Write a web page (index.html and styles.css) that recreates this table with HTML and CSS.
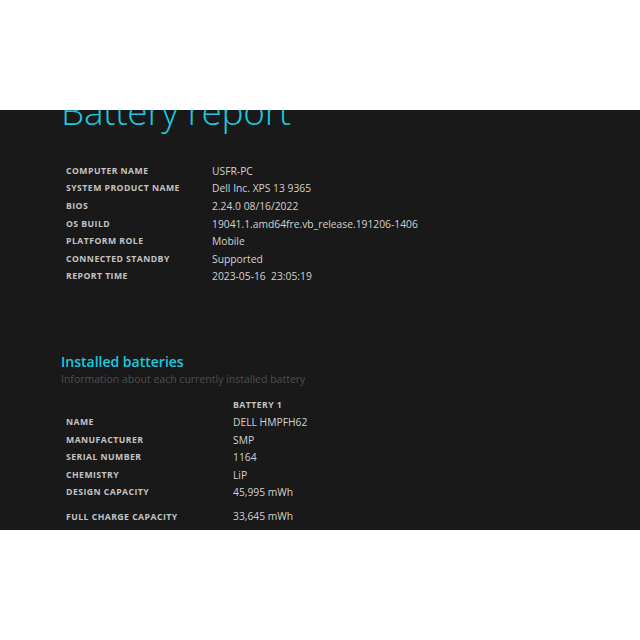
FILE: index.html
```html
<!DOCTYPE html>
<html>
<head>
<meta charset="utf-8">
<link rel="stylesheet" href="styles.css">
</head>
<body>
<div class="top"></div>
<div class="panel">
  <div class="content">
    <h1 class="title">Battery report</h1>
    <div class="info">
      <div class="lbl">Computer name</div><div class="val">USFR-PC</div>
      <div class="lbl">System product name</div><div class="val">Dell Inc. XPS 13 9365</div>
      <div class="lbl">BIOS</div><div class="val">2.24.0 08/16/2022</div>
      <div class="lbl">OS build</div><div class="val">19041.1.amd64fre.vb_release.191206-1406</div>
      <div class="lbl">Platform role</div><div class="val">Mobile</div>
      <div class="lbl">Connected standby</div><div class="val">Supported</div>
      <div class="lbl">Report time</div><div class="val">2023-05-16&nbsp;&nbsp;23:05:19</div>
    </div>
    <h2 class="section">Installed batteries</h2>
    <div class="sub">Information about each currently installed battery</div>
    <div class="batt">
      <div class="lbl"></div><div class="lbl">Battery 1</div>
      <div class="lbl">Name</div><div class="val">DELL HMPFH62</div>
      <div class="lbl">Manufacturer</div><div class="val">SMP</div>
      <div class="lbl">Serial number</div><div class="val">1164</div>
      <div class="lbl">Chemistry</div><div class="val">LiP</div>
      <div class="lbl">Design capacity</div><div class="val">45,995 mWh</div>
      <div class="lbl tall">Full charge capacity</div><div class="val tall">33,645 mWh</div>
      <div class="lbl">Cycle count</div><div class="val">-</div>
    </div>
  </div>
</div>
</body>
</html>
```
FILE: styles.css
```css
html, body { margin: 0; padding: 0; background: #ffffff; }
.top { height: 110px; }
.panel {
  height: 420px;
  background: #191919;
  overflow: hidden;
  font-family: "Open Sans", "Noto Sans", sans-serif;
}
.content { padding-left: 61px; margin-top: -21px; }
.title {
  margin: 0;
  font-weight: 300;
  font-size: 37px;
  line-height: 44px;
  color: #1ec8de;
  letter-spacing: -0.3px;
}
.info {
  display: grid;
  grid-template-columns: 146px auto;
  grid-auto-rows: 17.6px;
  align-items: center;
  margin-top: 29px;
  margin-left: 5px;
}
.lbl {
  text-transform: uppercase;
  font-size: 8.7px;
  font-weight: 700;
  letter-spacing: 0.45px;
  color: #c4c4c4;
  white-space: nowrap;
}
.val {
  font-size: 10.3px;
  color: #d2d2d2;
  white-space: nowrap;
}
.section {
  margin: 68px 0 0 0;
  font-size: 14px;
  font-weight: 600;
  line-height: 18px;
  color: #1ec8de;
}
.sub {
  font-size: 10.5px;
  color: #4e4e4e;
  line-height: 16px;
  margin-top: 0;
}
.batt {
  display: grid;
  grid-template-columns: 167px auto;
  grid-template-rows: repeat(6, 17.5px) 24px 17.5px;
  align-items: center;
  margin-top: 9px;
  margin-left: 5px;
}
.batt .tall {
  align-self: stretch;
  display: flex;
  align-items: flex-end;
  padding-bottom: 2px;
  box-sizing: border-box;
}
```
